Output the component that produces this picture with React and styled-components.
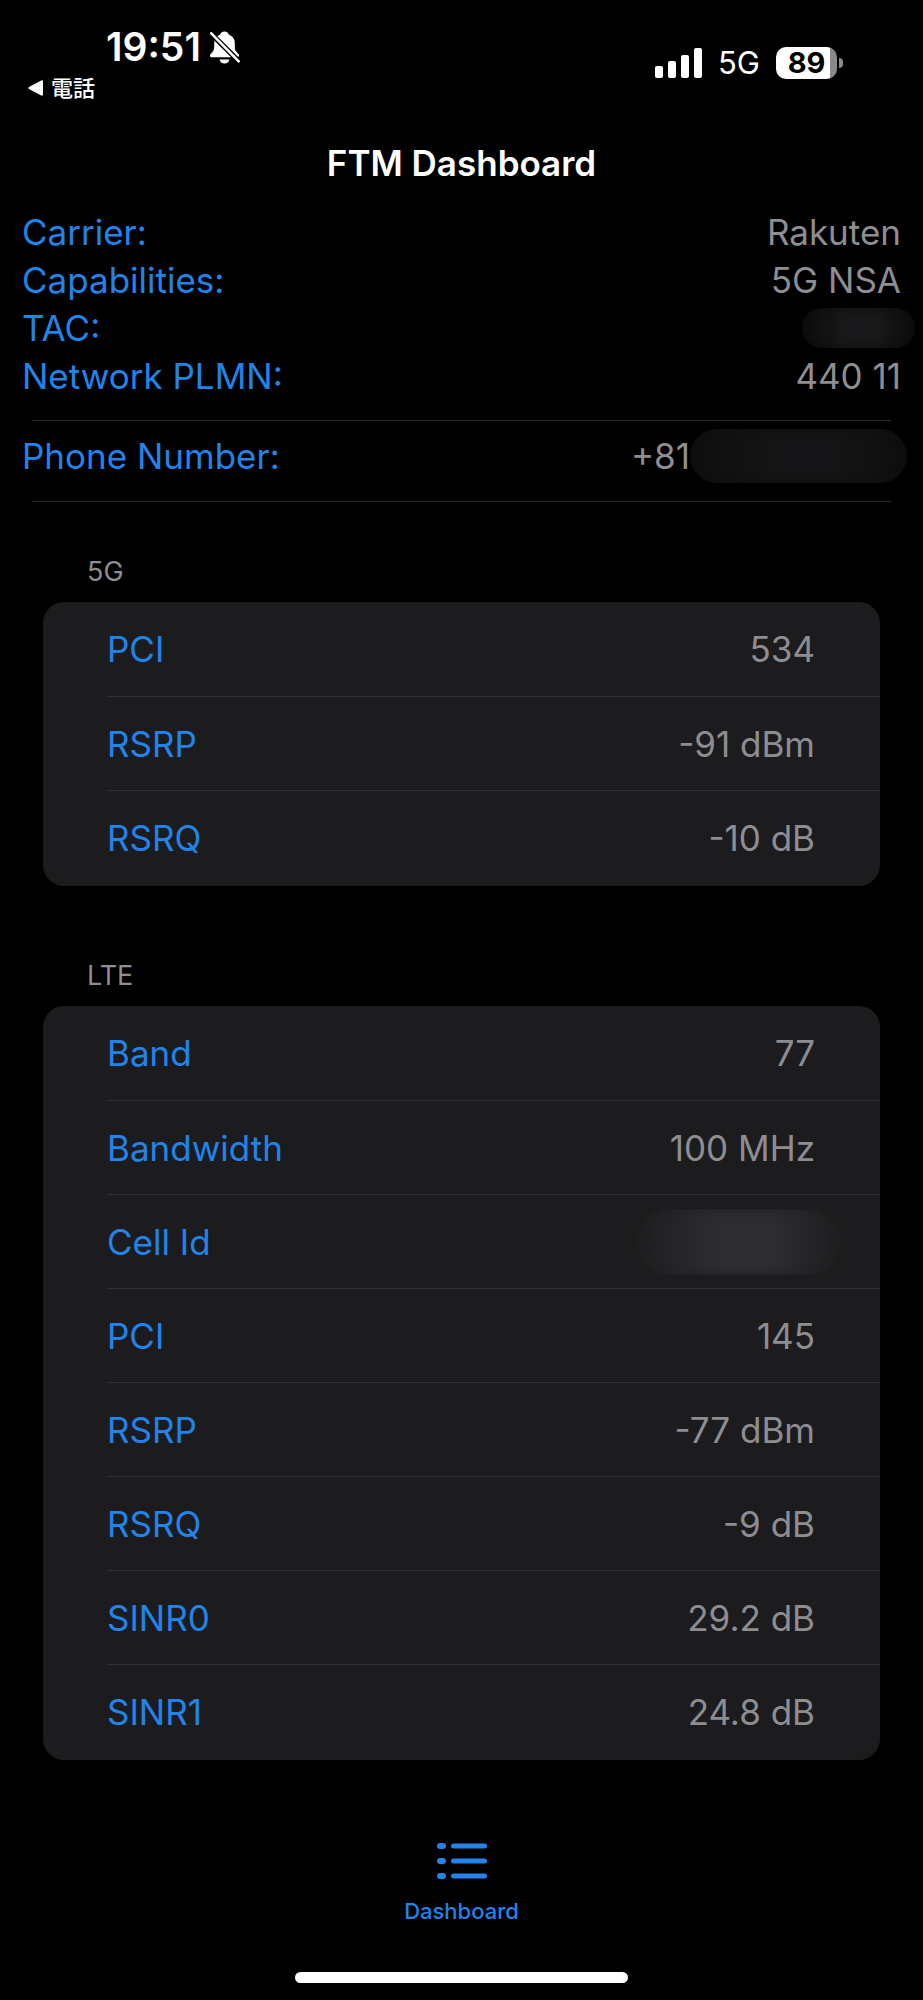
import React from "react";
import styled, { createGlobalStyle } from "styled-components";

const carrierInfo = [
  { name: "Carrier:", value: "Rakuten" },
  { name: "Capabilities:", value: "5G NSA" },
  { name: "TAC:", hidden: "small" },
  { name: "Network PLMN:", value: "440 11" },
];

const sections = [
  {
    title: "5G",
    rows: [
      { name: "PCI", value: "534" },
      { name: "RSRP", value: "-91 dBm" },
      { name: "RSRQ", value: "-10 dB" },
    ],
  },
  {
    title: "LTE",
    rows: [
      { name: "Band", value: "77" },
      { name: "Bandwidth", value: "100 MHz" },
      { name: "Cell Id", hidden: "large" },
      { name: "PCI", value: "145" },
      { name: "RSRP", value: "-77 dBm" },
      { name: "RSRQ", value: "-9 dB" },
      { name: "SINR0", value: "29.2 dB" },
      { name: "SINR1", value: "24.8 dB" },
    ],
  },
];

const BellOff = () => (
  <svg width="30" height="33" viewBox="0 0 30 33" fill="#fff" aria-hidden="true">
    <path d="M14.500 0.500c-2.200 0-3.700 1.200-4.300 3C6.200 5 4.200 8.200 4.200 12v4c0 2.400-.6 3.800-2.200 5.500L.6 23c-1.400 1.500-.6 3.300 1.400 3.300h25c1.900 0 2.700-1.800 1.400-3.300L27 21.500c-1.600-1.700-2.200-3.100-2.200-5.500V12c0-3.800-2-7-6-8.500-.6-1.800-2.100-3-4.300-3z" />
    <path d="M9.500 28.500h10c-.6 2.500-2.400 4-5 4s-4.400-1.500-5-4z" />
    <path d="M0 1.500l30 30" stroke="#000" strokeWidth="5.200" />
    <path d="M1.300 2.300l27.400 28" stroke="#fff" strokeWidth="2.600" strokeLinecap="round" />
  </svg>
);

const Signal = () => (
  <svg width="47" height="31" viewBox="0 0 47 31" fill="#fff" aria-hidden="true">
    <rect x="0" y="18" width="8" height="12" rx="2" />
    <rect x="13" y="13" width="8" height="17" rx="2" />
    <rect x="26" y="7" width="8" height="23" rx="2" />
    <rect x="39" y="0" width="8" height="30" rx="2" />
  </svg>
);

const ListIcon = () => (
  <svg width="50" height="36" viewBox="0 0 50 36" fill="#2184ea" aria-hidden="true">
    {[0, 15, 30].map((y) => (
      <g key={y}>
        <rect x="0" y={y} width="9" height="6" rx="3" />
        <rect x="14" y={y + 0.5} width="36" height="5" rx="2.500" />
      </g>
    ))}
  </svg>
);

const App = () => {
  return (
    <Page>
      <GlobalStyle />
      <StatusBar>
        <div>
          <Clock>
            <time>19:51</time>
            <BellOff />
          </Clock>
          <BackButton type="button">
            <svg width="15" height="16" viewBox="0 0 15 16" fill="#fff" aria-hidden="true">
              <path d="M13.200.5L1 6.900c-.9.500-.9 1.700 0 2.200l12.200 6.400c.9.400 1.800 0 1.800-1V1.500c0-1-.9-1.400-1.800-1z" />
            </svg>
            電話
          </BackButton>
        </div>
        <Indicators>
          <Signal />
          <Network>5G</Network>
          <Battery>
            <Level>89</Level>
          </Battery>
        </Indicators>
      </StatusBar>

      <Title>FTM Dashboard</Title>

      <InfoList>
        {carrierInfo.map(({ name, value, hidden }) => (
          <InfoRow key={name}>
            <Name>{name}</Name>
            <Value>{hidden ? <Redacted $size={hidden} /> : value}</Value>
          </InfoRow>
        ))}
      </InfoList>
      <Divider />
      <InfoList $spaced>
        <InfoRow>
          <Name>Phone Number:</Name>
          <Value>
            +81
            <Redacted $size="medium" />
          </Value>
        </InfoRow>
      </InfoList>
      <Divider />

      {sections.map(({ title, rows }) => (
        <Section key={title}>
          <SectionTitle>{title}</SectionTitle>
          <Card>
            {rows.map(({ name, value, hidden }) => (
              <CardRow key={name}>
                <Name>{name}</Name>
                <Value>{hidden ? <Redacted $size={hidden} /> : value}</Value>
              </CardRow>
            ))}
          </Card>
        </Section>
      ))}

      <TabBar>
        <Tab type="button">
          <ListIcon />
          Dashboard
        </Tab>
      </TabBar>
      <HomeIndicator />
    </Page>
  );
};

export default App;

const GlobalStyle = createGlobalStyle`
  * {
    box-sizing: border-box;
  }
  body {
    margin: 0;
    background: #000;
  }
  h1, h2, dl, dt, dd {
    margin: 0;
    font-weight: 400;
  }
  button {
    border: none;
    padding: 0;
    background: transparent;
    font-family: inherit;
    cursor: pointer;
  }
  svg {
    display: block;
    flex-shrink: 0;
  }
`;

const Page = styled.div`
  display: flex;
  flex-direction: column;
  min-height: 100vh;
  padding-bottom: 17px;
  background: #000;
  color: #fff;
  font-family: Inter, "Noto Sans CJK JP", sans-serif;
  font-size: 35px;
  line-height: 48px;
`;

const StatusBar = styled.header`
  display: flex;
  justify-content: space-between;
  align-items: flex-start;
  padding: 23px 86px 0 28px;
  height: 139px;
`;

const Clock = styled.div`
  display: flex;
  align-items: center;
  gap: 9px;
  padding-left: 78px;
  font-size: 39px;
  font-weight: 600;
`;

const BackButton = styled.button`
  display: flex;
  align-items: center;
  gap: 8px;
  color: #fff;
  font-size: 22px;
  font-weight: 500;
  line-height: 34px;
`;

const Indicators = styled.div`
  display: flex;
  align-items: center;
  gap: 16px;
  padding-top: 16px;
`;

const Network = styled.span`
  font-size: 31px;
`;

const Battery = styled.div`
  position: relative;
  width: 61px;
  height: 32px;
  border-radius: 10px;
  background: linear-gradient(to right, #fff 89%, #8a8a8a 89%);

  &::after {
    content: "";
    position: absolute;
    right: -6px;
    top: 11px;
    width: 4px;
    height: 10px;
    border-radius: 0 4px 4px 0;
    background: #8a8a8a;
  }
`;

const Level = styled.span`
  display: block;
  color: #000;
  font-size: 29px;
  font-weight: 700;
  line-height: 32px;
  text-align: center;
`;

const Title = styled.h1`
  font-size: 35px;
  font-weight: 600;
  text-align: center;
`;

const InfoList = styled.dl`
  padding: ${({ $spaced }) => ($spaced ? "11px 22px 21px" : "21px 22px 20px")};
`;

const InfoRow = styled.div`
  display: flex;
  justify-content: space-between;
  height: 48px;
`;

const Name = styled.dt`
  color: #2184ea;
`;

const Value = styled.dd`
  display: flex;
  align-items: center;
  color: #8d8d92;
`;

const blurs = {
  small: { width: 113, height: 40, shift: -14, color: "#19191b", edge: "#0c0c0d" },
  medium: { width: 217, height: 54, shift: -6, color: "#151517", edge: "#0e0e0f" },
  large: { width: 206, height: 66, shift: -27, color: "#2d2d31", edge: "#1e1e20" },
};

const Redacted = styled.span`
  width: ${({ $size }) => blurs[$size].width}px;
  height: ${({ $size }) => blurs[$size].height}px;
  margin-right: ${({ $size }) => blurs[$size].shift}px;
  border-radius: 33px;
  background: linear-gradient(
    to right,
    ${({ $size }) => `${blurs[$size].edge}, ${blurs[$size].color} 40%, ${blurs[$size].color} 65%, ${blurs[$size].edge}`}
  );
  box-shadow: inset 0 0 10px ${({ $size }) => blurs[$size].edge};
`;

const Divider = styled.hr`
  align-self: stretch;
  height: 1px;
  margin: 0 32px;
  border: none;
  background: #2a2a2c;
`;

const Section = styled.section`
  padding: 46px 43px 0;

  & + & {
    padding-top: 66px;
  }
`;

const SectionTitle = styled.h2`
  padding: 0 44px 6px;
  color: #8d8d92;
  font-size: 27px;
`;

const Card = styled.dl`
  padding: 0 0 2px 64px;
  border-radius: 21px;
  background: #1c1c1e;
`;

const CardRow = styled.div`
  display: flex;
  justify-content: space-between;
  align-items: center;
  height: 94px;
  padding-right: 65px;

  & + & {
    border-top: 1px solid #303033;
  }
`;

const TabBar = styled.nav`
  display: flex;
  justify-content: center;
  padding-top: 83px;
`;

const Tab = styled.button`
  display: flex;
  flex-direction: column;
  align-items: center;
  gap: 16px;
  color: #2184ea;
  font-size: 22px;
  font-weight: 500;
  line-height: 32px;
`;

const HomeIndicator = styled.div`
  align-self: center;
  width: 36%;
  height: 11px;
  margin-top: auto;
  border-radius: 6px;
  background: #fff;
`;
